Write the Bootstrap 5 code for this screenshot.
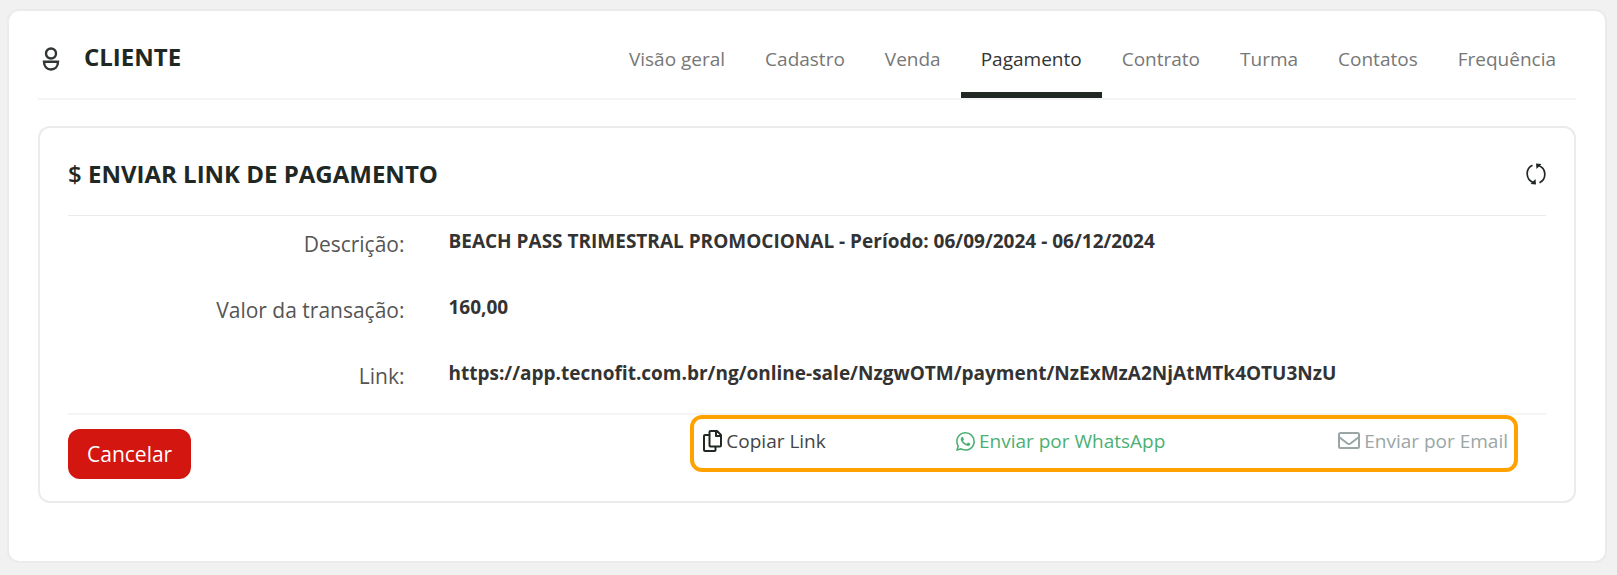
<!DOCTYPE html>
<html lang="pt-BR">
<head>
<meta charset="utf-8">
<meta name="viewport" content="width=device-width, initial-scale=1">
<title>Cliente - Pagamento</title>
<link href="https://cdn.jsdelivr.net/npm/bootstrap@5.3.0/dist/css/bootstrap.min.css" rel="stylesheet">
<style>
  body { background: #f1f1f1; color: #212823; font-family: "Open Sans", "Noto Sans", sans-serif; font-size: 19px; line-height: 28px; }
  .page-wrap { padding: 9px 10px 13px 7px; }
  .panel { background: #fff; border: 2px solid #ebebeb; border-radius: 12px; }
  .panel-outer { padding: 0 29px 58px; }
  .panel-inner { margin-top: 26px; padding: 28px 28px 22px; }
  .topbar { border-bottom: 2px solid #f4f4f4; }
  .brand { padding-top: 28px; }
  .heading { font-size: 24px; font-weight: 700; line-height: 36px; margin: 0; }
  .tabs .nav-link { color: #777; padding: 34px 20px 19px; border-bottom: 6px solid transparent; }
  .tabs .nav-link.active { color: #333; border-bottom-color: #212823; }
  .card-top { padding-bottom: 23px; border-bottom: 1px solid #ebebeb; }
  .refresh { color: #212823; }
  .details { padding-top: 10px; border-bottom: 2px solid #f4f4f4; margin: 0; }
  .details .row { --bs-gutter-x: 44px; min-height: 66px; }
  .details .row:last-child { min-height: 55px; }
  .details dt { color: #555; font-size: 21px; font-weight: 400; line-height: 36px; }
  .details dd { font-weight: 700; line-height: 30px; margin: 0; color: #333; overflow-wrap: anywhere; }
  .btn-cancel { --bs-btn-color: #fff; --bs-btn-bg: #d3160f; --bs-btn-hover-color: #fff; --bs-btn-hover-bg: #b5120c; --bs-btn-border-width: 0; --bs-btn-font-size: 21px; --bs-btn-line-height: 30px; --bs-btn-padding-x: 19px; --bs-btn-padding-y: 10px; --bs-btn-border-radius: 12px; margin-top: 14px; }
  .share { width: 56%; margin-right: 28px; padding: 8px 6px 13px 9px; border: 4px solid #ffa200; border-radius: 12px; display: grid; grid-template-columns: 31.4% 1fr auto; }
  .share a { display: flex; align-items: center; gap: 4px; text-decoration: none; white-space: nowrap; line-height: 28px; }
  .act-copy { color: #444; }
  .act-whats { color: #4caf73; }
  .act-mail { color: #9aa5a5; }
</style>
</head>
<body>
<main class="page-wrap">
  <section class="panel panel-outer">
    <header class="topbar d-flex justify-content-between align-items-start">
      <div class="brand d-flex align-items-center">
        <svg class="ms-1 me-4 mt-1" width="18" height="24" viewBox="0 0 18 24" fill="none" stroke="#303632" stroke-width="2.400" aria-hidden="true"><circle cx="9" cy="6.500" r="5"/><path d="M2 14.800h14c0 5-3 7.700-7 7.700s-7-2.700-7-7.700z"/></svg>
        <h1 class="heading">CLIENTE</h1>
      </div>
      <nav class="nav tabs flex-nowrap" aria-label="Cliente">
        <a class="nav-link" href="#">Visão geral</a>
        <a class="nav-link" href="#">Cadastro</a>
        <a class="nav-link" href="#">Venda</a>
        <a class="nav-link active" aria-current="page" href="#">Pagamento</a>
        <a class="nav-link" href="#">Contrato</a>
        <a class="nav-link" href="#">Turma</a>
        <a class="nav-link" href="#">Contatos</a>
        <a class="nav-link" href="#">Frequência</a>
      </nav>
    </header>
    <section class="panel panel-inner">
      <div class="card-top d-flex justify-content-between align-items-center">
        <h2 class="heading"><span class="fw-semibold">$</span> ENVIAR LINK DE PAGAMENTO</h2>
        <button type="button" class="refresh btn p-0 border-0 d-flex" aria-label="Atualizar">
          <svg width="20" height="22" viewBox="0 0 20 22" fill="none" stroke="currentColor" stroke-width="1.700" aria-hidden="true"><path d="M6.500 2.300A9.300 9.300 0 0 0 7.500 19.500M13.500 19.700A9.300 9.300 0 0 0 12.500 2.500"/><path d="M10 21.500l-.500-5.500L4.500 21zM10 .500l.500 5.500L15.500 1z" fill="currentColor" stroke="none"/></svg>
        </button>
      </div>
      <dl class="details">
        <div class="row"><dt class="col-3 text-end">Descrição:</dt><dd class="col-9">BEACH PASS TRIMESTRAL PROMOCIONAL - Período: 06/09/2024 - 06/12/2024</dd></div>
        <div class="row"><dt class="col-3 text-end">Valor da transação:</dt><dd class="col-9">160,00</dd></div>
        <div class="row"><dt class="col-3 text-end">Link:</dt><dd class="col-9">https://app.tecnofit.com.br/ng/online-sale/NzgwOTM/payment/NzExMzA2NjAtMTk4OTU3NzU</dd></div>
      </dl>
      <div class="d-flex justify-content-between align-items-start">
        <button type="button" class="btn btn-cancel">Cancelar</button>
        <div class="share">
          <a href="#" class="act-copy"><svg width="19" height="22" viewBox="0 0 19 22" fill="none" stroke="#212823" stroke-width="2" stroke-linejoin="round" aria-hidden="true"><path d="M7.500 1h6.500l4 4v10.500a1 1 0 0 1-1 1H7.500a1 1 0 0 1-1-1V2a1 1 0 0 1 1-1zM13 1v5h5M6 5H2a1 1 0 0 0-1 1v14a1 1 0 0 0 1 1h9.500a1 1 0 0 0 1-1v-3"/></svg>Copiar Link</a>
          <a href="#" class="act-whats"><svg width="19" height="19" viewBox="0 0 16 16" fill="currentColor" aria-hidden="true"><path d="M13.601 2.326A7.854 7.854 0 0 0 7.994 0C3.627 0 .068 3.558.064 7.926c0 1.399.366 2.760 1.057 3.965L0 16l4.204-1.102a7.933 7.933 0 0 0 3.790.965h.004c4.368 0 7.926-3.558 7.930-7.930A7.898 7.898 0 0 0 13.600 2.326zM7.994 14.521a6.573 6.573 0 0 1-3.356-.92l-.240-.144-2.494.654.666-2.433-.156-.251a6.560 6.560 0 0 1-1.007-3.505c0-3.626 2.957-6.584 6.591-6.584a6.560 6.560 0 0 1 4.660 1.931 6.557 6.557 0 0 1 1.928 4.660c-.004 3.639-2.961 6.592-6.592 6.592zm3.615-4.934c-.197-.099-1.170-.578-1.353-.646-.182-.065-.315-.099-.445.099-.133.197-.513.646-.627.775-.114.133-.232.148-.430.050-.197-.100-.836-.308-1.592-.985-.590-.525-.985-1.175-1.103-1.372-.114-.198-.011-.304.088-.403.087-.088.197-.232.296-.346.100-.114.133-.198.198-.330.065-.134.034-.248-.015-.347-.050-.099-.445-1.076-.612-1.470-.160-.389-.323-.335-.445-.340-.114-.007-.247-.007-.380-.007a.729.729 0 0 0-.529.247c-.182.198-.691.677-.691 1.654 0 .977.710 1.916.810 2.049.098.133 1.394 2.132 3.383 2.992.470.205.840.326 1.129.418.475.152.904.129 1.246.080.380-.058 1.171-.480 1.338-.943.164-.464.164-.860.114-.943-.049-.084-.182-.133-.380-.232z"/></svg>Enviar por WhatsApp</a>
          <a href="#" class="act-mail"><svg width="22" height="18" viewBox="0 0 22 18" fill="none" stroke="currentColor" stroke-width="2" stroke-linejoin="round" aria-hidden="true"><rect x="1" y="1" width="20" height="15" rx="1.500"/><path d="M1 5l8.500 6.500c1 .700 2 .700 3 0L21 5"/></svg>Enviar por Email</a>
        </div>
      </div>
    </section>
  </section>
</main>
<script src="https://cdn.jsdelivr.net/npm/bootstrap@5.3.0/dist/js/bootstrap.bundle.min.js"></script>
</body>
</html>
